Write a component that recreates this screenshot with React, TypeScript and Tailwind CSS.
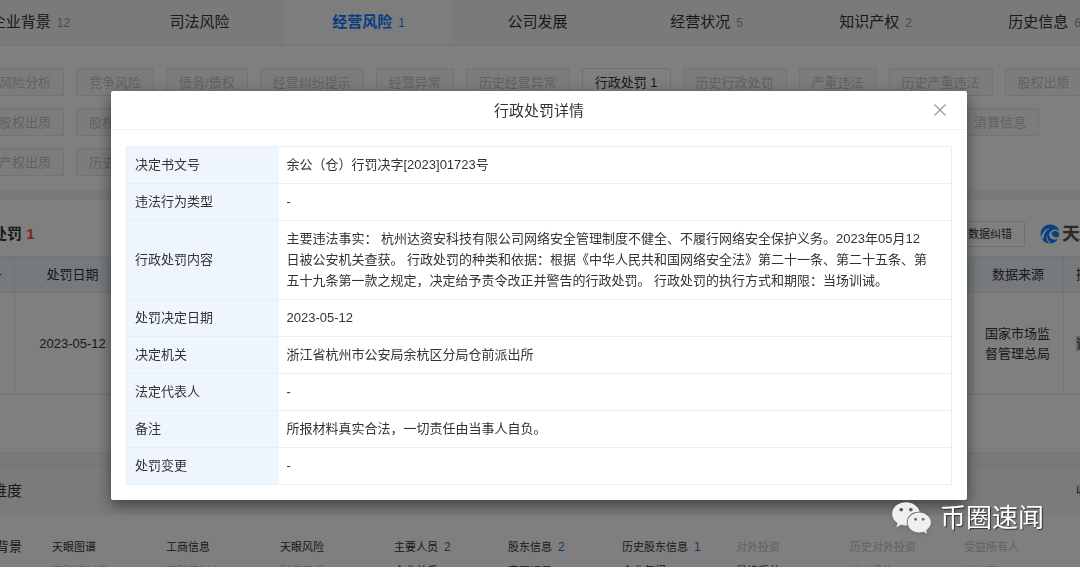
import clsx from 'clsx'
import { FaWeixin } from 'react-icons/fa'

interface Counted {
  label: string
  count?: number
}

interface Dimension extends Counted {
  disabled?: boolean
}

const tabs: Counted[] = [
  { label: '企业背景', count: 12 },
  { label: '司法风险' },
  { label: '经营风险', count: 1 },
  { label: '公司发展' },
  { label: '经营状况', count: 5 },
  { label: '知识产权', count: 2 },
  { label: '历史信息', count: 6 },
]

const chips: Counted[] = [
  { label: '风险分析' },
  { label: '竞争风险' },
  { label: '债务/债权' },
  { label: '经营纠纷提示' },
  { label: '经营异常' },
  { label: '历史经营异常' },
  { label: '行政处罚', count: 1 },
  { label: '历史行政处罚' },
  { label: '严重违法' },
  { label: '历史严重违法' },
  { label: '股权出质' },
]

const dimensions: Dimension[][] = [
  [
    { label: '天眼图谱' },
    { label: '工商信息' },
    { label: '天眼风险' },
    { label: '主要人员', count: 2 },
    { label: '股东信息', count: 2 },
    { label: '历史股东信息', count: 1 },
    { label: '对外投资', disabled: true },
    { label: '历史对外投资', disabled: true },
    { label: '受益所有人', disabled: true },
  ],
  [
    { label: '实际控制权', disabled: true },
    { label: '实际控制人', disabled: true },
    { label: '财务简析', disabled: true },
    { label: '企业关系' },
    { label: '变更记录' },
    { label: '企业年报' },
    { label: '最终受益' },
    { label: '分支机构', disabled: true },
    { label: '总公司', disabled: true },
  ],
]

const details = [
  { name: '决定书文号', lines: ['余公（仓）行罚决字[2023]01723号'] },
  { name: '违法行为类型', lines: ['-'] },
  {
    name: '行政处罚内容',
    lines: [
      '主要违法事实： 杭州达资安科技有限公司网络安全管理制度不健全、不履行网络安全保护义务。2023年05月12',
      '日被公安机关查获。 行政处罚的种类和依据：根据《中华人民共和国网络安全法》第二十一条、第二十五条、第',
      '五十九条第一款之规定，决定给予责令改正并警告的行政处罚。 行政处罚的执行方式和期限：当场训诫。',
    ],
  },
  { name: '处罚决定日期', lines: ['2023-05-12'] },
  { name: '决定机关', lines: ['浙江省杭州市公安局余杭区分局仓前派出所'] },
  { name: '法定代表人', lines: ['-'] },
  { name: '备注', lines: ['所报材料真实合法，一切责任由当事人自负。'] },
  { name: '处罚变更', lines: ['-'] },
]

function Chip({ label, count }: Counted) {
  return (
    <button
      className={clsx(
        'h-7 shrink-0 whitespace-nowrap rounded-xs border px-3 text-[13px] leading-none',
        count ? 'border-[#e0e0e0] bg-white text-[#333]' : 'border-[#e6e6e6] bg-[#f9f9f9] text-[#c4c4c4]',
      )}
    >
      {label}
      {count && ` ${count}`}
    </button>
  )
}

function TabBar() {
  return (
    <nav className="-ml-[54px] -mr-[49px] flex h-[46px] border-b border-[#ebebeb] bg-[#f5f5f5]">
      {tabs.map((tab) => {
        const active = tab.label === '经营风险'
        return (
          <button
            key={tab.label}
            className={clsx(
              'flex flex-1 items-center justify-center gap-1.5 text-[15px]',
              active ? 'bg-[#fbfbfb] font-bold text-[#0f7bff]' : 'text-[#333]',
            )}
          >
            {tab.label}
            {tab.count && (
              <span className={clsx('text-xs font-normal', !active && 'text-[#999]')}>{tab.count}</span>
            )}
          </button>
        )
      })}
    </nav>
  )
}

function BrandLogo() {
  return (
    <div className="flex items-center gap-0.5 whitespace-nowrap text-lg font-bold text-[#555]">
      <svg viewBox="0 0 20 20" className="size-5" aria-hidden="true">
        <path
          d="M10 .6C15 .6 18.600 3.600 19.300 7.600c-1.500-1.800-4-2.500-6.300-1.700-2.600.9-4 3.100-3.800 5.400.3 3.100 3.400 4.900 6.700 4.300l2-.6C16.200 17.800 13.400 19.500 10 19.500 4.700 19.500.6 15.300.6 10 .6 4.900 4.800.6 10 .6z"
          fill="#0a84ff"
        />
        <path d="M11.500 9.300c.8-1.700 2.400-2.500 4.300-2.200 1.700.3 3 1.500 3.500 3.200-.2 1.100-.5 2-.9 2.800-2.900 1-6.200-.2-6.900-3.800z" fill="#0a84ff" />
        <path d="M1.200 12.800C2 8.500 5 5.200 10.200 3.900 6.300 6 4 9 3.600 13.600l-.6 2.200c-.9-.9-1.500-1.900-1.800-3z" fill="#fff" />
        <path d="M7.600 10.500c-1 3.100.2 6.300 3.400 8.800l-1.400.1c-3-2.400-3.900-5.700-2-8.900z" fill="#fff" />
      </svg>
      天眼查
    </div>
  )
}

function PenaltySection() {
  return (
    <section className="border-t border-[#ebebeb] bg-white pb-[57px] pt-5">
      <div className="-ml-[38px] -mr-9 mb-2 flex h-7 items-center">
        <h2 className="flex-1 text-[15px] font-bold text-[#333]">
          行政处罚 <span className="text-[#ff4a3d]">1</span>
        </h2>
        <button className="mr-[15px] h-[26px] rounded-xs border border-[#dcdcdc] px-3 text-[11px] leading-none text-[#333]">
          数据纠错
        </button>
        <BrandLogo />
      </div>
      <div className="-ml-[106px] -mr-[81px]">
        <table className="w-full table-fixed border-collapse text-[13px] leading-5 text-[#333]">
          <thead>
            <tr className="h-9 bg-[#edf5fb] [&>th]:border [&>th]:border-[#dce8f2] [&>th]:font-normal">
              <th className="w-[120px] pr-3 text-right">决定书文号</th>
              <th className="w-[116px]">处罚日期</th>
              <th />
              <th className="w-[91px]">数据来源</th>
              <th className="w-[97px] px-3 text-left">操作</th>
            </tr>
          </thead>
          <tbody>
            <tr className="h-[102px] [&>td]:border [&>td]:border-[#dce8f2]">
              <td />
              <td className="text-center">2023-05-12</td>
              <td />
              <td className="px-3">国家市场监督管理总局</td>
              <td className="px-3">
                <a href="#detail" className="bg-[#ccc]">详情</a>
              </td>
            </tr>
          </tbody>
        </table>
      </div>
    </section>
  )
}

function DimensionSection() {
  return (
    <section className="border-t border-[#ebebeb] bg-white">
      <div className="-ml-[38px] -mr-5 flex h-12 items-center justify-between bg-[#f7f7f7] text-[#333]">
        <h2 className="text-[15px]">全部维度</h2>
        <button className="text-xs">收起</button>
      </div>
      <div className="-ml-[30px] -mr-16 flex pt-5 text-[#333]">
        <h3 className="w-[82px] shrink-0 text-[13px] leading-6">企业背景</h3>
        <div>
          {dimensions.map((row, i) => (
            <ul key={i} className="flex text-[11px] leading-6">
              {row.map((item) => (
                <li
                  key={item.label}
                  className={clsx('w-[114px] shrink-0 whitespace-nowrap', item.disabled && 'text-[#c4c4c4]')}
                >
                  {item.label}
                  {item.count && <span className="ml-1.5 text-xs leading-none text-[#1a6fd6]">{item.count}</span>}
                </li>
              ))}
            </ul>
          ))}
        </div>
      </div>
    </section>
  )
}

function DetailDialog() {
  return (
    <div className="fixed inset-0 bg-black/50 pl-[111px] pr-[113px] pt-[91px]">
      <div
        role="dialog"
        aria-modal="true"
        aria-labelledby="dialog-title"
        className="rounded-xs bg-white pb-[15px] text-[#333] shadow-[0_5px_15px_rgba(0,0,0,0.5)]"
      >
        <div className="grid h-[39px] grid-cols-[1fr_auto_1fr] items-center border-b border-[#f3f3f3] px-5">
          <h1 id="dialog-title" className="col-start-2 pt-0.5 text-[15px]">
            行政处罚详情
          </h1>
          <button aria-label="关闭" className="justify-self-end">
            <svg viewBox="0 0 14 14" className="size-3.5" fill="none" stroke="#999" strokeWidth="1.2">
              <path d="M1.500 1.500l11 11M12.500 1.500l-11 11" />
            </svg>
          </button>
        </div>
        <div className="px-[15px] pt-4">
          <table className="w-full border-collapse text-left text-[13px] leading-[21px]">
            <tbody>
              {details.map((row) => (
                <tr key={row.name} className="border border-[#e4eff8]">
                  <th className="w-[152px] bg-[#eef5fc] px-2 pb-2 pt-[7px] font-normal">{row.name}</th>
                  <td className="px-2 pb-2 pt-[7px]">
                    {row.lines.map((line) => (
                      <p key={line}>{line}</p>
                    ))}
                  </td>
                </tr>
              ))}
            </tbody>
          </table>
        </div>
      </div>
    </div>
  )
}

export default function App() {
  return (
    <div className="h-screen overflow-hidden bg-[#f5f5f5] font-['Liberation_Sans','Noto_Sans_CJK_SC',sans-serif]">
      <TabBar />
      <section className="mb-[9px] flex flex-col gap-3 bg-white pb-3.5 pt-[22px]">
        <div className="-ml-[14px] flex gap-3">
          {chips.map((chip) => (
            <Chip key={chip.label} {...chip} />
          ))}
        </div>
        <div className="-ml-[14px] flex gap-3 pr-[41px]">
          <Chip label="股权出质" />
          <Chip label="股权质押" />
          <div className="flex-1" />
          <Chip label="清算信息" />
        </div>
        <div className="-ml-[14px] flex gap-3">
          <Chip label="产权出质" />
          <Chip label="历史信息" />
        </div>
      </section>
      <PenaltySection />
      <div className="h-3.5 border-t border-[#ebebeb]" />
      <DimensionSection />
      <DetailDialog />
      <div className="fixed bottom-[31px] right-9 flex items-center gap-2 text-[26px] leading-9 text-white [text-shadow:1px_1px_1px_rgba(0,0,0,0.6)]">
        <FaWeixin className="h-9 w-[41px] text-[#efefef] drop-shadow-sm" />
        币圈速闻
      </div>
    </div>
  )
}
